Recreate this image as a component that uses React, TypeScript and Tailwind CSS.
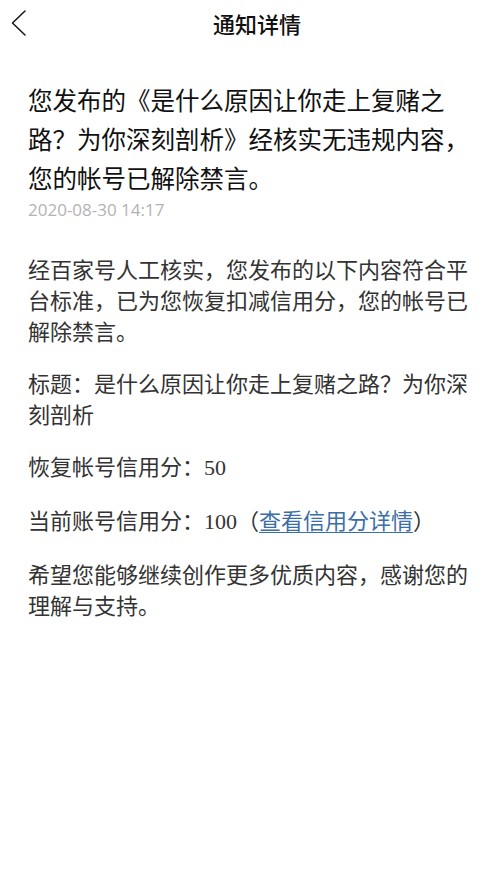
import React from "react";

const cjk = { fontFamily: '"Noto Sans CJK SC", "Noto Sans", sans-serif' };

export default function App() {
  return (
    <div className="w-[500px] h-[880px] bg-white text-[#333]" style={cjk}>
      <header className="h-[46px] grid grid-cols-[1fr_auto_1fr] items-center">
        <div className="pl-[10px] flex items-center">
          <svg width="18" height="28" viewBox="0 0 18 28" fill="none">
            <path d="M15 2 L2.5 14 L15 26" stroke="#1a1a1a" strokeWidth="1.6" strokeLinecap="round" strokeLinejoin="round" />
          </svg>
        </div>
        <h1 className="text-[22px] font-medium text-[#111] leading-none pl-[14px]">通知详情</h1>
        <div />
      </header>
      <main className="px-[28px]">
        <p className="mt-[34px] text-[24.5px] leading-[39px] text-[#111]">
          您发布的《是什么原因让你走上复赌之路？为你深刻剖析》经核实无违规内容，您的帐号已解除禁言。
        </p>
        <p
          className="mt-[1px] text-[17px] leading-[24px] text-[#b3b3b3]"
          style={{ fontFamily: '"Open Sans", "Liberation Sans", sans-serif' }}
        >
          2020-08-30 14:17
        </p>
        <div className="mt-[31px] flex flex-col gap-[21px] text-[22px] leading-[31px]">
          <p>经百家号人工核实，您发布的以下内容符合平台标准，已为您恢复扣减信用分，您的帐号已解除禁言。</p>
          <p>标题：是什么原因让你走上复赌之路？为你深刻剖析</p>
          <p>
            恢复帐号信用分：
            <span style={{ fontFamily: '"Liberation Serif", serif' }}>50</span>
          </p>
          <p>
            当前账号信用分：
            <span style={{ fontFamily: '"Liberation Serif", serif' }}>100</span>
            （<span className="text-[#3b6ea6] underline underline-offset-[3px] decoration-1">查看信用分详情</span>）
          </p>
          <p>希望您能够继续创作更多优质内容，感谢您的理解与支持。</p>
        </div>
      </main>
    </div>
  );
}
